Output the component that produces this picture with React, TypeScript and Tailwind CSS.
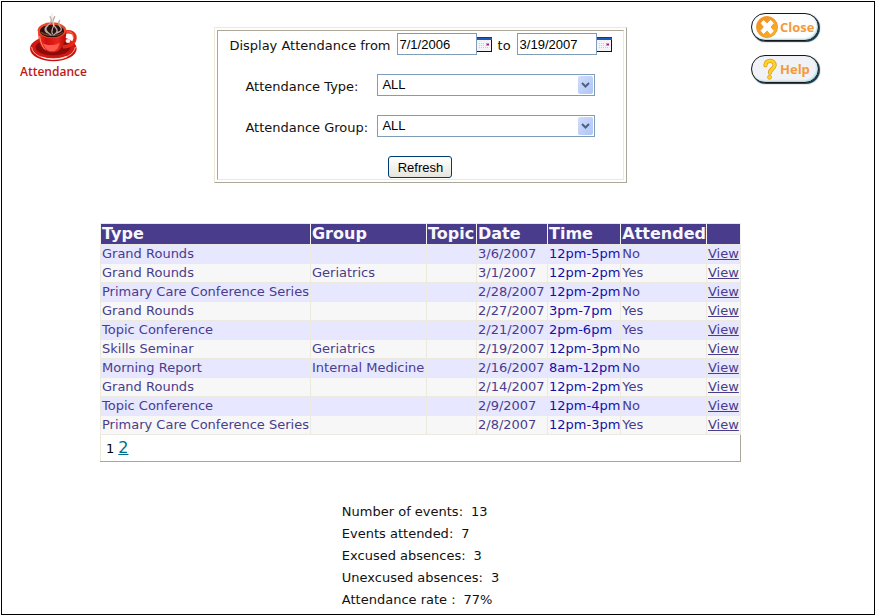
import { useState } from 'react';
import type { ReactNode } from 'react';

interface EventRow { type: string; group: string; topic: string; date: string; time: string; attended: string; }

const ROWS: EventRow[] = [
  { type: 'Grand Rounds', group: '', topic: '', date: '3/6/2007', time: '12pm-5pm', attended: 'No' },
  { type: 'Grand Rounds', group: 'Geriatrics', topic: '', date: '3/1/2007', time: '12pm-2pm', attended: 'Yes' },
  { type: 'Primary Care Conference Series', group: '', topic: '', date: '2/28/2007', time: '12pm-2pm', attended: 'No' },
  { type: 'Grand Rounds', group: '', topic: '', date: '2/27/2007', time: '3pm-7pm', attended: 'Yes' },
  { type: 'Topic Conference', group: '', topic: '', date: '2/21/2007', time: '2pm-6pm', attended: 'Yes' },
  { type: 'Skills Seminar', group: 'Geriatrics', topic: '', date: '2/19/2007', time: '12pm-3pm', attended: 'No' },
  { type: 'Morning Report', group: 'Internal Medicine', topic: '', date: '2/16/2007', time: '8am-12pm', attended: 'No' },
  { type: 'Grand Rounds', group: '', topic: '', date: '2/14/2007', time: '12pm-2pm', attended: 'Yes' },
  { type: 'Topic Conference', group: '', topic: '', date: '2/9/2007', time: '12pm-4pm', attended: 'No' },
  { type: 'Primary Care Conference Series', group: '', topic: '', date: '2/8/2007', time: '12pm-3pm', attended: 'Yes' },
];

const COLUMNS = [
  { label: 'Type', width: 'w-[210px]' },
  { label: 'Group', width: 'w-[116px]' },
  { label: 'Topic', width: 'w-[50px]' },
  { label: 'Date', width: 'w-[71px]' },
  { label: 'Time', width: 'w-[72px]' },
  { label: 'Attended', width: 'w-[84px]' },
  { label: '', width: 'w-[34px]' },
];

const STATS = [
  { label: 'Number of events:', value: '13' },
  { label: 'Events attended:', value: '7' },
  { label: 'Excused absences:', value: '3' },
  { label: 'Unexcused absences:', value: '3' },
  { label: 'Attendance rate :', value: '77%' },
];

function CoffeeCup() {
  return (
    <svg viewBox="88 42 141 147" className="h-[49px] w-[47px]" aria-hidden="true">
      <defs>
        <radialGradient id="saucer" cx="50%" cy="45%" r="55%">
          <stop offset="0" stopColor="#7d0808" />
          <stop offset="0.75" stopColor="#d41a14" />
          <stop offset="1" stopColor="#c40c0c" />
        </radialGradient>
        <linearGradient id="cup" x1="0" x2="1">
          <stop offset="0" stopColor="#f2331f" />
          <stop offset="0.3" stopColor="#cf1010" />
          <stop offset="0.7" stopColor="#e8261a" />
          <stop offset="1" stopColor="#b30808" />
        </linearGradient>
      </defs>
      <ellipse cx="158" cy="149" rx="70" ry="38" fill="url(#saucer)" />
      <path d="M93 144c2 22 29 36 65 36s63-14 66-36" fill="none" stroke="#ffac9e" strokeWidth="3" />
      <path d="M122 174c20 9 55 9 76-1" fill="none" stroke="#ffe0d8" strokeWidth="4" />
      <ellipse cx="157" cy="145" rx="52" ry="24" fill="#8e0a0a" />
      <path d="M188 102c20-9 37 0 35 17-2 17-20 26-37 24" fill="none" stroke="#e32a18" strokeWidth="10" />
      <path d="M192 101c17-7 27 1 25 14" fill="none" stroke="#ff7e58" strokeWidth="3" />
      <ellipse cx="202" cy="126" rx="7" ry="6" fill="#ffe9e4" />
      <path d="M112 93c0 36 11 67 41 67s44-31 44-65z" fill="url(#cup)" />
      <path d="M126 132c10 8 37 9 51-1-3 16-10 26-24 26s-22-11-27-25z" fill="#ff5a4c" />
      <path d="M117 111c3 21 9 34 17 41" fill="none" stroke="#ff9a84" strokeWidth="3" />
      <ellipse cx="154" cy="94" rx="43" ry="24" fill="#ee4526" />
      <ellipse cx="154" cy="96" rx="36" ry="19" fill="#2b0f0a" />
      <path d="M122 99c9 12 52 14 64 1" fill="none" stroke="#75412e" strokeWidth="4" />
      <path d="M151 108c-15-10-21-18-9-29 9-8 15-15 6-26M159 108c13-8 13-15 5-23-9-9-11-16-2-32M168 102c17-6 17-12 9-21-4-6-4-11 0-17M139 101c-10-8-6-15 0-20" fill="none" stroke="#b9aaa5" strokeWidth="4" strokeLinecap="round" />
      <path d="M155 105c-5-13 5-20 4-31-1-8-7-13-5-29" fill="none" stroke="#e5dfdc" strokeWidth="3" strokeLinecap="round" />
    </svg>
  );
}

function CalendarIcon() {
  return (
    <svg viewBox="0 0 15 15" className="size-[15px]" shapeRendering="crispEdges" aria-hidden="true">
      <rect width="15" height="15" fill="#f3f3f8" />
      <rect width="15" height="3" fill="#1c5cb8" />
      <rect width="15" height="1" fill="#0e3c86" />
      <path d="M2 6.5h6M2 8.5h6M2 10.5h10" stroke="#c8cad6" strokeDasharray="1 1" />
      <rect x="9" y="6" width="3" height="3" fill="#d68fd0" />
      <rect x="10" y="7" width="2" height="1" fill="#a01068" />
      <path d="M0 14h15v1H0zM14 3h1v12h-1z" fill="#111318" />
    </svg>
  );
}

function CloseIcon() {
  return (
    <svg viewBox="0 0 22 22" className="size-[22px]" aria-hidden="true">
      <defs>
        <linearGradient id="closeFill" x1="0" y1="0" x2="1" y2="1">
          <stop offset="0" stopColor="#f28a1c" />
          <stop offset="1" stopColor="#fbb42c" />
        </linearGradient>
      </defs>
      <circle cx="11" cy="11" r="10.5" fill="url(#closeFill)" stroke="#ee9a34" />
      <path d="M5.2 7.3L7.6 4.6 11.2 8l3.2-3.6 3 2.6-3.4 4 3.4 4.1-3 2.6-3.2-3.8-3.6 3.6-2.6-2.8L8.4 11z" fill="#fff" stroke="#fff" strokeLinejoin="round" />
    </svg>
  );
}

function HelpIcon() {
  return (
    <svg viewBox="0 0 16 24" className="ml-1.5 h-[22px] w-4" aria-hidden="true">
      <path d="M3 8C3 1.5 13.5 1.5 13 8c-.3 4-5 4-5 8" fill="none" stroke="#d99a10" strokeWidth="4.6" strokeLinecap="round" />
      <path d="M3 8C3 1.5 13.5 1.5 13 8c-.3 4-5 4-5 8" fill="none" stroke="#ffd42a" strokeWidth="3" strokeLinecap="round" />
      <circle cx="7.5" cy="21" r="2.2" fill="#ffd42a" stroke="#d99a10" strokeWidth="0.8" />
    </svg>
  );
}

function PillButton({ icon, label, fill }: { icon: ReactNode; label: string; fill: string }) {
  return (
    <button
      type="button"
      className={`mr-0.5 flex h-7 w-[68px] items-center gap-0.5 rounded-full border border-[#15181c] pl-1 font-['Open_Sans',sans-serif] text-[13px] leading-none font-bold text-[#f39a3c] shadow-[1px_1px_1px_#0d3b4c,inset_-1px_-1px_2px_#9fd0de] ${fill}`}
    >
      {icon}
      {label}
    </button>
  );
}

function DateField({ label, defaultValue }: { label: string; defaultValue: string }) {
  return (
    <div className="flex items-center">
      <input
        type="text"
        aria-label={label}
        defaultValue={defaultValue}
        className="h-[22px] w-20 border border-[#7f9db9] bg-white px-[2px] font-['Liberation_Sans',sans-serif] text-[13px] text-black"
      />
      <button type="button" aria-label={`${label} calendar`}>
        <CalendarIcon />
      </button>
    </div>
  );
}

function SelectField({ id, label }: { id: string; label: string }) {
  return (
    <div className="flex items-center pl-4">
      <label htmlFor={id} className="w-[132px] pt-1">{label}</label>
      <div className="relative">
        <select
          id={id}
          className="block h-[22px] w-[218px] appearance-none border border-[#7f9db9] bg-white px-1 font-['Liberation_Sans',sans-serif] text-[13px] text-black"
        >
          <option>ALL</option>
        </select>
        <span className="pointer-events-none absolute inset-y-0.5 right-0.5 flex w-[15px] items-center justify-center rounded-xs bg-linear-to-br from-[#d0ddfc] to-[#aec5f5]">
          <svg viewBox="0 0 9 6" className="h-1.5 w-[9px]" aria-hidden="true">
            <path d="M1 1l3.5 3.5L8 1" fill="none" stroke="#4d6185" strokeWidth="2" />
          </svg>
        </span>
      </div>
    </div>
  );
}

export default function App() {
  const [page, setPage] = useState(1);

  return (
    <div className="flex min-h-screen bg-white p-px font-['DejaVu_Sans',Verdana,sans-serif] text-[13px] text-[#111]">
      <main className="flex-1 border border-black pt-[11px] pr-[53px] pl-[18px]">
        {/* Header */}
        <header className="grid grid-cols-[1fr_auto_1fr] items-start">
          <div className="flex w-fit flex-col items-center">
            <CoffeeCup />
            <h1 className="font-['Open_Sans',sans-serif] text-xs leading-5 font-semibold text-[#c01818]">Attendance</h1>
          </div>

          {/* Filters */}
          <div className="mt-[14px] border border-t-[#ece9d8] border-r-[#aca899] border-b-[#aca899] border-l-[#ece9d8] p-0.5">
            <form
              onSubmit={e => e.preventDefault()}
              className="flex flex-col gap-[19px] border border-t-[#aca899] border-r-[#ece9d8] border-b-[#ece9d8] border-l-[#aca899] px-[11px] pt-0.5 pb-px leading-4"
            >
              <div className="flex items-center gap-1.5">
                <span className="pt-1">Display Attendance from</span>
                <DateField label="From date" defaultValue="7/1/2006" />
                <span className="pt-1">to</span>
                <DateField label="To date" defaultValue="3/19/2007" />
              </div>
              <SelectField id="type" label="Attendance Type:" />
              <SelectField id="group" label="Attendance Group:" />
              <button
                type="submit"
                className="h-[22px] w-16 self-center rounded-[3px] border border-[#003c74] bg-linear-to-b from-white to-[#e6e5dd] font-['Liberation_Sans',sans-serif] text-[13px] leading-none text-black"
              >
                Refresh
              </button>
            </form>
          </div>

          <div className="flex flex-col items-end gap-[14px]">
            <PillButton icon={<CloseIcon />} label="Close" fill="bg-white" />
            <PillButton icon={<HelpIcon />} label="Help" fill="bg-[#f1f2f6]" />
          </div>
        </header>

        {/* Events */}
        <table className="mx-auto mt-10 border-collapse border border-t-[#ece9d8] border-r-[#aca899] border-b-[#aca899] border-l-[#ece9d8] whitespace-nowrap text-[#4a3c8c]">
          <thead>
            <tr className="h-5 bg-[#4a3c8c] text-left text-base leading-5 text-[#f7f7ff]">
              {COLUMNS.map(c => (
                <th key={c.label} scope="col" className={`${c.width} border-x border-[#f4f2ea] py-0 pr-0 pl-px font-bold`}>{c.label}</th>
              ))}
            </tr>
          </thead>
          <tbody>
            {ROWS.map(r => (
              <tr key={r.date} className="leading-[18px] odd:bg-[#e7e7ff] even:bg-[#f7f7f7] *:border *:border-[#ece9e0] *:py-0 *:pr-0 *:pl-px">
                <td>{r.type}</td>
                <td>{r.group}</td>
                <td>{r.topic}</td>
                <td>{r.date}</td>
                <td className="text-[#1010a8]">{r.time}</td>
                <td>{r.attended}</td>
                <td><a href="#view" className="underline">View</a></td>
              </tr>
            ))}
          </tbody>
          <tfoot>
            <tr>
              <td colSpan={7} className="h-[27px] px-[5px] py-0 text-black">
                <div className="flex items-baseline gap-1">
                  {[1, 2].map(n => n === page ? (
                    <span key={n}>{n}</span>
                  ) : (
                    <a key={n} href={`#page-${n}`} onClick={() => setPage(n)} className="text-base text-[#006b8c] underline">{n}</a>
                  ))}
                </div>
              </td>
            </tr>
          </tfoot>
        </table>

        {/* Totals */}
        <dl className="mx-auto mt-[39px] w-fit leading-[22px]">
          {STATS.map(s => (
            <div key={s.label} className="flex gap-2">
              <dt>{s.label}</dt>
              <dd>{s.value}</dd>
            </div>
          ))}
        </dl>
      </main>
    </div>
  );
}
